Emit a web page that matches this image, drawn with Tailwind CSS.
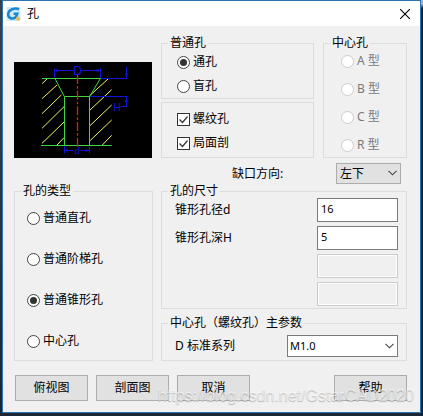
<!DOCTYPE html>
<html lang="zh-CN">

<head>
    <meta charset="UTF-8">
    <meta name="viewport" content="width=device-width, initial-scale=1.0">
    <title>孔</title>
    <script src="https://cdn.jsdelivr.net/npm/@tailwindcss/browser@4"></script>
</head>

<body class="bg-[#1b2735] flex font-['Noto_Sans','Noto_Sans_CJK_SC',sans-serif] text-xs text-black">
    <div class="w-0.5 shrink-0 bg-linear-to-b from-[#3a4250] to-[#1b2735]"></div>

    <div class="flex-1 mb-[3px]">
        <div class="relative bg-[#f0f0f0] border border-[#2d74b2]">
            <header class="h-[25px] bg-white flex items-center pl-[3px] pr-[10px]">
                <svg class="size-4" viewBox="0 0 16 16" fill="none">
                    <rect x="0.5" y="1" width="14" height="14" rx="1" fill="#cfeafa" />
                    <path d="M13 3.2C9 1.4 2.2 3.4 2.2 8.6c0 3.8 4.4 5 7.6 2.8l1.4-3.6H7.6" stroke="#1b86d6" stroke-width="2.6" />
                    <circle cx="12" cy="12.6" r="2.2" fill="#e8bd62" />
                </svg>
                <h1 class="ml-[5px]">孔</h1>
                <button type="button" aria-label="关闭" class="ml-auto">
                    <svg class="size-[10px]" viewBox="0 0 10 10" fill="none" stroke="#000" stroke-width="1.1">
                        <path d="M0 0l10 10M10 0L0 10" />
                    </svg>
                </button>
            </header>

            <form class="pt-[10px] pb-[11px] pl-[11px] pr-[13px]">
                <div class="flex gap-2">
                    <div class="w-[139px] shrink-0">
                        <svg class="w-[138px] h-24 my-[26px] bg-black" viewBox="18 18 414 288" fill="none" stroke-width="3">
                            <g stroke="#f4f468" stroke-width="3">
                                <path d="M102 83l15-14M102 128l45-41M102 173l58-56M102 217l66-65M102 262l66-64M147 267l21-22" />
                                <path d="M245 119l55-50M245 163l66-62M245 210l66-63M245 255l66-63M283 267l28-29" />
                            </g>
                            <g stroke="#1212d8">
                                <path d="M139 43.500h58M220 43.500h58M139.500 37v28M277.500 37v28M145 40l8 3.500-8 3.500M272 40l-8 3.500 8 3.500" />
                                <path d="M278 67.500h80M246 121.500h114M355.500 32v36M352 52l3.500 10 3.500-10M355.500 121v32M352 138l3.500-10 3.500 10M338 151.500h18" />
                                <path d="M169.500 270v22M244.500 270v22M169 283.500h26M218 283.500h27M176 280l6 3.500-6 3.500M238 280l-6 3.500 6 3.500" />
                            </g>
                            <g stroke="#3fd63f">
                                <path d="M102 67.500h176M141 67.500l28 54h76l32-54M169.500 121v147M244.500 121v147M99 268.500h212" />
                            </g>
                            <path d="M208.500 57v218" stroke="#e01a1a" stroke-width="4" stroke-dasharray="27 6 8 6" />
                            <g fill="#1212d8" font-family="Liberation Sans" text-anchor="middle">
                                <text x="209" y="56" font-size="38">D</text>
                                <text x="327" y="164" font-size="32">H</text>
                                <text x="207" y="294" font-size="28">d</text>
                            </g>
                        </svg>

                        <fieldset class="border border-[#dcdcdc] pt-[10px] pb-[9px] pl-3">
                            <legend class="-ml-[6px] px-[2px] leading-[14px]">孔的类型</legend>
                            <div class="flex flex-col gap-[21px]">
                                <label class="flex items-center gap-[3px] h-5"><input type="radio" name="holeType"
                                        class="appearance-none size-[13px] rounded-full border border-[#444] bg-white grid place-items-center checked:before:size-[7px] checked:before:rounded-full checked:before:bg-[#333]">普通直孔</label>
                                <label class="flex items-center gap-[3px] h-5"><input type="radio" name="holeType"
                                        class="appearance-none size-[13px] rounded-full border border-[#444] bg-white grid place-items-center checked:before:size-[7px] checked:before:rounded-full checked:before:bg-[#333]">普通阶梯孔</label>
                                <label class="flex items-center gap-[3px] h-5"><input type="radio" name="holeType" checked
                                        class="appearance-none size-[13px] rounded-full border border-[#444] bg-white grid place-items-center checked:before:size-[7px] checked:before:rounded-full checked:before:bg-[#333]">普通锥形孔</label>
                                <label class="flex items-center gap-[3px] h-5"><input type="radio" name="holeType"
                                        class="appearance-none size-[13px] rounded-full border border-[#444] bg-white grid place-items-center checked:before:size-[7px] checked:before:rounded-full checked:before:bg-[#333]">中心孔</label>
                            </div>
                        </fieldset>
                    </div>

                    <div class="flex-1">
                        <div class="flex gap-[9px]">
                            <div class="flex-1">
                                <fieldset class="border border-[#dcdcdc] pt-[2px] pb-[2px] pl-[15px]">
                                    <legend class="-ml-[9px] px-[2px] leading-[14px]">普通孔</legend>
                                    <div class="flex flex-col gap-1">
                                        <label class="flex items-center gap-[3px] h-5"><input type="radio" name="plain" checked
                                                class="appearance-none size-[13px] rounded-full border border-[#444] bg-white grid place-items-center checked:before:size-[7px] checked:before:rounded-full checked:before:bg-[#333]">通孔</label>
                                        <label class="flex items-center gap-[3px] h-5"><input type="radio" name="plain"
                                                class="appearance-none size-[13px] rounded-full border border-[#444] bg-white grid place-items-center checked:before:size-[7px] checked:before:rounded-full checked:before:bg-[#333]">盲孔</label>
                                    </div>
                                </fieldset>
                                <div class="mt-[3px] border border-[#dcdcdc] pt-[6px] pb-1 pl-[15px] flex flex-col gap-1">
                                    <label class="flex items-center gap-[3px] h-5">
                                        <span class="grid">
                                            <input type="checkbox" checked class="peer col-start-1 row-start-1 appearance-none size-[13px] border border-[#333] bg-white">
                                            <svg class="col-start-1 row-start-1 size-[13px] invisible peer-checked:visible pointer-events-none" viewBox="0 0 13 13" fill="none" stroke="#333" stroke-width="1.2"><path d="M2.500 6.500l3 3 5-6" /></svg>
                                        </span>螺纹孔</label>
                                    <label class="flex items-center gap-[3px] h-5">
                                        <span class="grid">
                                            <input type="checkbox" checked class="peer col-start-1 row-start-1 appearance-none size-[13px] border border-[#333] bg-white">
                                            <svg class="col-start-1 row-start-1 size-[13px] invisible peer-checked:visible pointer-events-none" viewBox="0 0 13 13" fill="none" stroke="#333" stroke-width="1.2"><path d="M2.500 6.500l3 3 5-6" /></svg>
                                        </span>局面剖</label>
                                </div>
                            </div>

                            <fieldset disabled class="w-[84px] border border-[#dcdcdc] pt-[2px] pb-[3px] pl-[17px]">
                                <legend class="-ml-[11px] px-[2px] leading-[14px]">中心孔</legend>
                                <div class="flex flex-col gap-[10px] text-[#7a7a7a]">
                                    <label class="flex items-center gap-[3px] h-[18px]"><input type="radio" name="center" class="appearance-none size-[13px] rounded-full border border-[#ccc] bg-white">A 型</label>
                                    <label class="flex items-center gap-[3px] h-[18px]"><input type="radio" name="center" class="appearance-none size-[13px] rounded-full border border-[#ccc] bg-white">B 型</label>
                                    <label class="flex items-center gap-[3px] h-[18px]"><input type="radio" name="center" class="appearance-none size-[13px] rounded-full border border-[#ccc] bg-white">C 型</label>
                                    <label class="flex items-center gap-[3px] h-[18px]"><input type="radio" name="center" class="appearance-none size-[13px] rounded-full border border-[#ccc] bg-white">R 型</label>
                                </div>
                            </fieldset>
                        </div>

                        <div class="mt-[5px] pr-[6px] flex items-center justify-end">
                            <label for="direction" class="w-[104px]">缺口方向:</label>
                            <div class="relative w-[65px]">
                                <select id="direction" class="block appearance-none w-full h-[21px] pl-[3px] border border-[#adadad] bg-[#e1e1e1]">
                                    <option>左下</option>
                                </select>
                                <svg class="absolute right-1 top-[7px] w-[9px] h-[6px] pointer-events-none" viewBox="0 0 9 6" fill="none" stroke="#444" stroke-width="1.1"><path d="M.5.8l4 4 4-4" /></svg>
                            </div>
                        </div>

                        <fieldset class="border border-[#dcdcdc] pb-[2px] pl-[13px] pr-2">
                            <legend class="-ml-[7px] px-[2px] leading-[14px]">孔的尺寸</legend>
                            <div class="grid grid-cols-[1fr_81px] gap-y-1 items-center">
                                <label for="diameter">锥形孔径d</label>
                                <input type="text" id="diameter" value="16" class="w-full h-6 pl-[3px] pb-[3px] border border-[#7a7a7a] bg-white text-[11px]">
                                <label for="depth">锥形孔深H</label>
                                <input type="text" id="depth" value="5" class="w-full h-6 pl-[3px] pb-[3px] border border-[#7a7a7a] bg-white text-[11px]">
                                <input type="text" aria-label="尺寸三" disabled class="col-start-2 w-full h-6 border border-[#ccc] bg-[#f0f0f0] inset-ring inset-ring-white">
                                <input type="text" aria-label="尺寸四" disabled class="col-start-2 w-full h-6 border border-[#ccc] bg-[#f0f0f0] inset-ring inset-ring-white">
                            </div>
                        </fieldset>

                        <fieldset class="mt-[7px] border border-[#dcdcdc] pt-[5px] pb-[3px] pl-[13px] pr-2">
                            <legend class="-ml-[7px] px-[2px] leading-[14px]">中心孔（螺纹孔）主参数</legend>
                            <div class="flex items-center justify-between">
                                <label for="series">D 标准系列</label>
                                <div class="relative w-[111px]">
                                    <select id="series" class="block appearance-none w-full h-[22px] pl-[2px] border border-[#7a7a7a] bg-white text-[11px]">
                                        <option>M1.0</option>
                                    </select>
                                    <svg class="absolute right-1 top-2 w-[9px] h-[6px] pointer-events-none" viewBox="0 0 9 6" fill="none" stroke="#444" stroke-width="1.1"><path d="M.5.8l4 4 4-4" /></svg>
                                </div>
                            </div>
                        </fieldset>
                    </div>
                </div>

                <div class="mt-[14px] pl-[1px] flex gap-2">
                    <button type="button" class="w-[73px] h-[26px] border border-[#adadad] bg-[#e1e1e1]">俯视图</button>
                    <button type="button" class="w-[73px] h-[26px] border border-[#adadad] bg-[#e1e1e1]">剖面图</button>
                    <button type="button" class="w-[73px] h-[26px] border border-[#adadad] bg-[#e1e1e1]">取消</button>
                    <button type="button" class="w-[73px] h-[26px] border border-[#adadad] bg-[#e1e1e1] ml-auto">帮助</button>
                </div>
            </form>

            <p class="absolute right-[6px] bottom-1 font-['Liberation_Sans',sans-serif] text-base text-white/60 text-shadow-[0_1px_1px_#00000040] pointer-events-none">https://blog.csdn.net/GstarCAD2020</p>
        </div>
    </div>

    <div class="w-0.5 shrink-0 bg-linear-to-b from-[#8fb8dc] from-1% to-[#04284a] to-2%"></div>
</body>

</html>
